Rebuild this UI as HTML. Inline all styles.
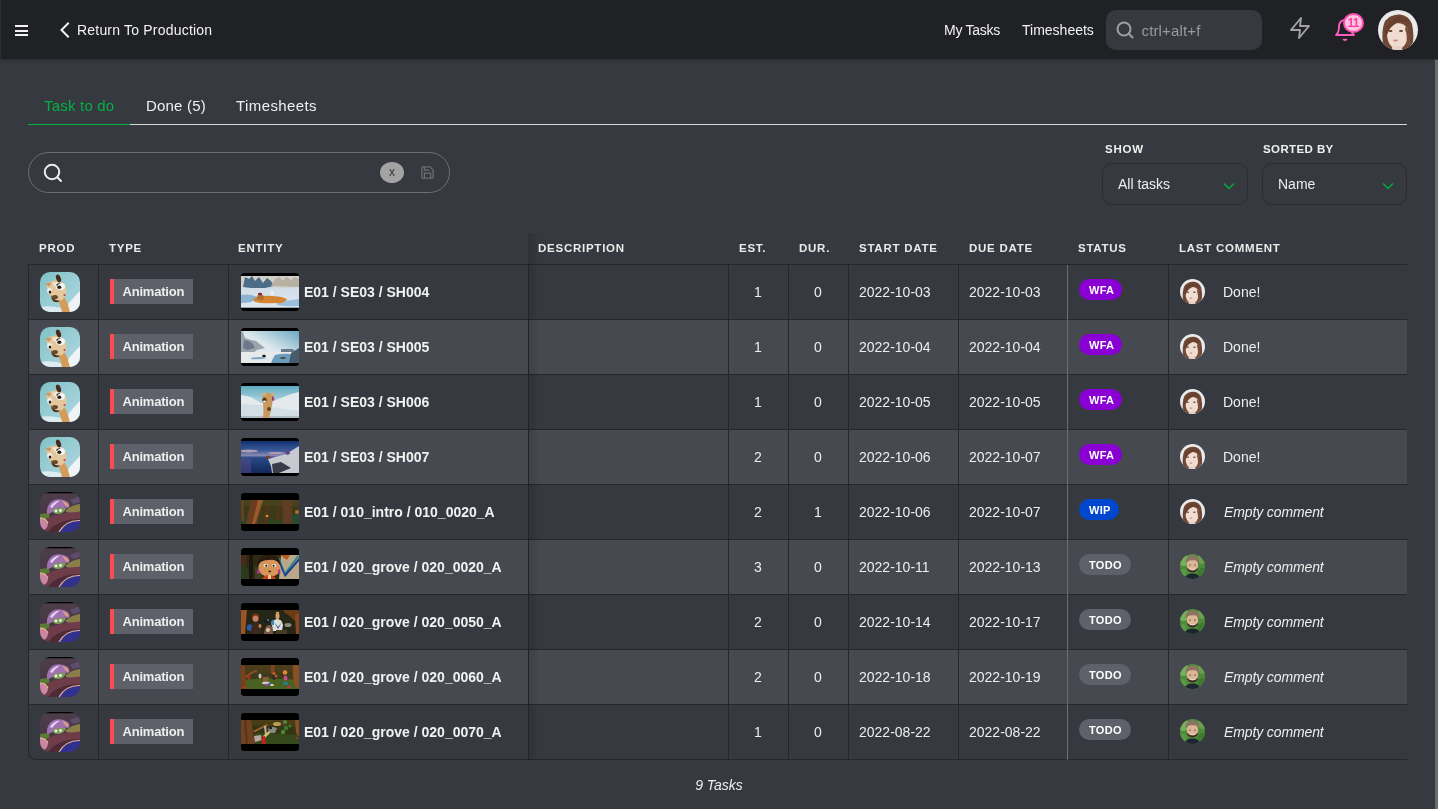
<!DOCTYPE html><html><head><meta charset="utf-8"><title>My Tasks</title><style>
*{margin:0;padding:0;box-sizing:border-box}
html,body{width:1438px;height:809px;overflow:hidden}
body{will-change:transform;background:#36393f;font-family:"Liberation Sans",sans-serif;color:#eeeeee;position:relative}
.abs{position:absolute}
.header{position:absolute;left:0;top:0;width:1438px;height:59px;background:#202125}
.lstrip{position:absolute;left:0;top:0;width:1px;height:59px;background:#2b2c30}
.burger{position:absolute;left:15px;width:13px;height:2px;background:#f2f2f2}
.htext{position:absolute;font-size:14px;color:#f2f2f2;top:22px;line-height:17px;white-space:nowrap}
.hsearch{position:absolute;left:1106px;top:10px;width:156px;height:40px;border-radius:10px;background:#36393f}
.ph{position:absolute;left:35.5px;top:11.5px;letter-spacing:0.15px;font-size:15px;color:#9a9a9a;line-height:17px}
.tabs{position:absolute;left:28px;top:124px;width:1379px;height:1px;background:#d6d6d6}
.tabact{position:absolute;left:28px;top:124px;width:102px;height:1px;background:#00b242}
.tab{position:absolute;top:97px;letter-spacing:0.2px;font-size:15px;line-height:18px;color:#f0f0f0;white-space:nowrap}
.sbar{position:absolute;left:28px;top:152px;width:422px;height:41px;border:1px solid #6f6f6f;border-radius:21px}
.xbtn{position:absolute;left:380px;top:162px;width:24px;height:21px;border-radius:50%;background:#a3a3a3;color:#333;font-size:12px;text-align:center;line-height:20px}
.flabel{position:absolute;top:143px;font-size:11.5px;font-weight:bold;letter-spacing:0.4px;color:#f0f0f0;line-height:13px}
.dd{position:absolute;top:163px;height:42px;border:1px solid #2a2c31;border-radius:10px}
.dd span{position:absolute;left:15px;top:12px;font-size:14px;line-height:17px;color:#eee}
.dd svg{position:absolute;left:120px;top:18px}
.th{position:absolute;top:242px;font-size:11.5px;font-weight:bold;letter-spacing:0.75px;color:#eaeaea;line-height:13px;white-space:nowrap}
.hline{position:absolute;left:28px;top:264px;width:1379px;height:1px;background:#25272b}
.row{position:absolute;left:28px;width:1379px;height:55px;border-bottom:1px solid #25272b;background:#36393f}
.row.alt{background:#46494f}
.row.last{border-left:1px solid #25272b;border-bottom-left-radius:8px;left:28px}
.row.last>div{margin-left:-1px}
.row>div{position:absolute;top:-1px;height:55px}
.c-prod{left:12px;width:40px}
.c-prod svg{position:absolute;top:8px;left:0;border-radius:10px}
.c-type{left:82px}
.tag{position:absolute;top:15px;left:0;height:25px;width:83px;background:#5e6169;border-left:4px solid #fa4b4f;font-size:13px;font-weight:bold;line-height:25px;padding-left:8.5px;letter-spacing:-0.2px;color:#eee;white-space:nowrap}
.c-ent{left:212px;width:290px}
.thumb{position:absolute;left:1px;top:9px;width:58px;height:38px;background:#000;border-radius:4px;overflow:hidden}
.thumb svg{display:block}
.ename{position:absolute;left:64px;top:20px;font-size:14px;font-weight:bold;line-height:17px;color:#f2f2f2;white-space:nowrap}
.c-est,.c-dur{width:60px;text-align:center;font-size:14px;line-height:17px;padding-top:20px;color:#eee}
.c-est{left:700px}.c-dur{left:760px}
.c-sd,.c-dd{font-size:14px;line-height:17px;padding-top:20px;color:#eee}
.c-sd{left:831px}.c-dd{left:941px}
.c-st{left:1051px}
.pill{position:absolute;top:15px;height:21px;border-radius:11px;font-size:11px;font-weight:bold;letter-spacing:0.3px;line-height:23px;padding:0 10px;color:#fff;white-space:nowrap}
.pill.wfa{background:#8a00d4;width:43px}
.pill.wip{background:#0047d0;width:40px}
.pill.todo{background:#5e6169;width:52px}
.c-com{left:1152px}
.cav{position:absolute;left:0;top:15px;width:25px;height:25px;border-radius:50%;overflow:hidden}
.cav svg{display:block}
.com{position:absolute;left:43px;top:20px;font-size:14px;line-height:17px;color:#eee;white-space:nowrap}
.com.it{font-style:italic;left:44px;letter-spacing:-0.12px}
.vl{position:absolute;top:265px;width:1px;height:495px;background:#25272b}
.vl.st{background:#6d6d6d}
.shadow{position:absolute;left:528px;top:233px;width:10px;height:527px;background:linear-gradient(to right,rgba(0,0,0,.10),rgba(0,0,0,.09) 40%,rgba(0,0,0,.04) 80%,rgba(0,0,0,0))}
.footer{position:absolute;left:0;width:1438px;top:777px;text-align:center;font-size:14px;font-style:italic;line-height:17px;color:#eee}
.scrollbar{position:absolute;left:1435px;top:60px;width:3px;height:749px;background:#6b6b6b}

</style></head><body>
<svg width="0" height="0" style="position:absolute">
<defs>
<linearGradient id="g-sky" x1="0" y1="0" x2="1" y2="1"><stop offset="0" stop-color="#7ec2c6"/><stop offset="1" stop-color="#b4d8e2"/></linearGradient>
<filter id="bl1" x="-10%" y="-10%" width="120%" height="120%"><feGaussianBlur stdDeviation="0.6"/></filter>
<filter id="bl2" x="-10%" y="-10%" width="120%" height="120%"><feGaussianBlur stdDeviation="0.45"/></filter>
<g id="p-scrat"><rect width="40" height="40" fill="url(#g-sky)"/>
 <g filter="url(#bl1)">
 <path d="M26 40 L29 31 Q34 25 40 19 L40 40Z" fill="#eef4f6"/>
 <path d="M0 35 Q12 33 24 37 L24 40 L0 40Z" fill="#dcecf0"/>
 <path d="M19 23 Q25 24 27 30 L30 40 L22 40 Q20 31 17 27Z" fill="#d49c58"/>
 <path d="M6 12 Q12 7 19 9 Q26 12 26.5 18 Q26 25 22 28 Q16 31 12 27 Q8 22 6 12Z" fill="#e2c89c"/>
 <path d="M12 11 Q20 8 25 13 Q20 12 15 15Z" fill="#f2e8d4"/>
 <path d="M11 23 Q14 29 20 28.5 Q18 31.5 13.5 29.5 Q11 27 11 23Z" fill="#4a3020"/>
 <ellipse cx="15" cy="25" rx="3" ry="2" fill="#6a4a30"/>
 <ellipse cx="18.5" cy="6.5" rx="2.3" ry="4" fill="#4a2a1a" transform="rotate(-20 18.5 6.5)"/>
 <path d="M5.5 12.5 Q8 9.5 11.5 11 L9.5 14.5Z" fill="#c89868"/>
 <ellipse cx="20.5" cy="14.5" rx="4.5" ry="3.4" fill="#f4f4f2"/>
 <path d="M16 13 Q18 10.5 21 11 Q18 12 17 14Z" fill="#3a2414"/>
 <ellipse cx="19.3" cy="15.3" rx="2" ry="1.8" fill="#2a1a14"/>
 <ellipse cx="9.5" cy="18.8" rx="2.4" ry="2.8" fill="#f2f2ee"/>
 <ellipse cx="10" cy="20" rx="1.3" ry="1.5" fill="#2a1a14"/>
 <circle cx="24.5" cy="23" r="1" fill="#d83030"/>
 </g></g>
<linearGradient id="g-mush" x1="0" y1="0" x2="0" y2="1"><stop offset="0" stop-color="#4e3e4c"/><stop offset="1" stop-color="#44303e"/></linearGradient>
<g id="p-mush"><rect width="40" height="40" fill="url(#g-mush)"/>
 <g filter="url(#bl1)">
 <rect width="40" height="1.3" fill="#000"/>
 <path d="M30 8 L40 4 L40 10 L33 12Z" fill="#5e4e6e"/>
 <path d="M26 18 Q32 13 40 12 L40 20 Q32 22 26 20Z" fill="#8a7e4a"/>
 <path d="M0 22 L9 21 L10 28 L0 28Z" fill="#5a7a34"/>
 <path d="M0 30 Q14 22 26 21 Q34 20 40 19.5 L40 27 Q30 27 22 30 Q14 34 8 40 L0 40Z" fill="#6e3c4a"/>
 <path d="M8 40 Q14 32 22 30 Q30 27 40 27 L40 40Z" fill="#4e2c36"/>
 <path d="M19 40 Q26 28 40 28.5 L40 40Z" fill="#30308e"/>
 <path d="M19 40 Q26 28 40 28.5" fill="none" stroke="#e0b0a0" stroke-width="1.2"/>
 <path d="M0 26 Q6 26 8 31 Q8 36 4 38 L0 38Z" fill="#cc86a4"/>
 <path d="M0 26 Q6 26 8 31" fill="none" stroke="#e8d090" stroke-width="1"/>
 <path d="M7 22 Q6 13 13 8.5 Q21 5.5 28 10 Q31 14 28 16 Q21 15 15 18 Q10 22 7 22Z" fill="#a070b0"/>
 <path d="M10 15 Q13 9 20 8.5 Q16 11 12 16Z" fill="#dcd4f4"/>
 <path d="M22 9 Q28 10 29 15 L26 14Z" fill="#e0a080"/>
 <path d="M12 18 Q18 15 26 16 Q25 21 19 22 Q13 22.5 12 18Z" fill="#7a9a54"/>
 <circle cx="16" cy="19" r="1.4" fill="#f2f2f2"/><circle cx="20.5" cy="18.5" r="1.4" fill="#f2f2f2"/>
 </g></g>
<g id="av-f"><rect width="40" height="40" fill="#eaeaea"/>
 <g filter="url(#bl2)">
 <path d="M5 36 Q3 20 7 11 Q13 4 22 4.5 Q31 5.5 34 14 Q36 24 35 32 Q33 37 28 39 L12 39 Q7 38 5 36Z" fill="#6e4634"/>
 <path d="M9 24 Q9 15 17 13 Q27 12 30 20 Q31 32 24 38 Q19 40 15 38 Q9 33 9 24Z" fill="#f0dcd0"/>
 <rect x="14" y="36" width="10" height="4" fill="#e8d0c4"/>
 <path d="M7 22 Q10 9 21 7 Q29 7 32 14 Q26 10 19 13 Q12 16 9 25Z" fill="#68402e"/>
 <path d="M28 16 Q33 24 32 34 L28 37 Q30 26 27 19Z" fill="#7a4e3a"/>
 <ellipse cx="12.5" cy="21" rx="2" ry="0.9" fill="#5a3a30"/><ellipse cx="23" cy="21" rx="2" ry="0.9" fill="#5a3a30"/>
 <ellipse cx="17.5" cy="30.5" rx="2.6" ry="1" fill="#c48c84"/>
 </g></g>
<g id="av-m"><rect width="40" height="40" fill="#4e8a3c"/>
 <g filter="url(#bl2)">
 <circle cx="6" cy="10" r="9" fill="#78b05a"/><circle cx="36" cy="8" r="8" fill="#6aa04c"/><circle cx="36" cy="30" r="8" fill="#3e7a30"/><circle cx="4" cy="30" r="6" fill="#5a9a44"/>
 <path d="M7 40 Q9 31 20 31 Q31 31 33 40Z" fill="#1e2630"/>
 <ellipse cx="20" cy="18" rx="9" ry="11" fill="#dcb696"/>
 <path d="M9 16 Q7 3 20 2 Q33 3 31 16 Q29 9 20 10 Q12 9 9 16Z" fill="#8c7460"/>
 <path d="M11 22 Q20 31 29 22 Q28 29 20 29.5 Q12 29 11 22Z" fill="#3a2a20"/>
 <ellipse cx="16" cy="17.5" rx="1.3" ry="0.8" fill="#3a2a20"/><ellipse cx="24" cy="17.5" rx="1.3" ry="0.8" fill="#3a2a20"/>
 <path d="M16 24 Q20 26 24 24" fill="none" stroke="#f0f0f0" stroke-width="1"/>
 </g></g>
<linearGradient id="g-snow" x1="0" y1="0" x2="0" y2="1"><stop offset="0" stop-color="#c8d8e4"/><stop offset="1" stop-color="#dfe8ee"/></linearGradient>
<g id="t1"><rect width="58" height="38" fill="#000"/><g filter="url(#bl2)"><rect y="3" width="58" height="32" fill="url(#g-snow)"/>
 <path d="M0 3 L58 3 L58 14 Q40 16 30 13 Q15 15 0 14Z" fill="#d0d0c8"/>
 <path d="M2 14 L4 4 L8 6 L11 3 L14 8 L18 4 L22 10 L26 5 L30 8 L33 13 L24 15 L10 15Z" fill="#4e6c88"/>
 <path d="M30 13 L34 6 L38 4 L42 8 L45 4 L50 7 L54 4 L58 6 L58 14Z" fill="#b8b0a0"/>
 <path d="M0 22 Q10 20 18 25 Q12 30 0 30Z" fill="#8ab2d2"/>
 <path d="M36 30 Q46 27 58 26 L58 33 Q46 34 36 32Z" fill="#9ac0dc"/>
 <path d="M12 26 Q20 22 30 23 Q40 23 46 26 Q44 31 34 30 Q22 31 14 29Z" fill="#d48432"/>
 <ellipse cx="19.5" cy="24.5" rx="3.5" ry="3" fill="#b07030"/>
 <ellipse cx="19" cy="21" rx="2.2" ry="1.2" fill="#8a2030"/>
 <ellipse cx="31" cy="20" rx="1.6" ry="2.2" fill="#f0f0f0"/>
 <rect y="34" width="58" height="1" fill="#9aa8b0"/>
</g></g>
<linearGradient id="g-ice" x1="0" y1="1" x2="1" y2="0"><stop offset="0" stop-color="#e8ecec"/><stop offset=".5" stop-color="#dde8ec"/><stop offset="1" stop-color="#6aa8c4"/></linearGradient>
<g id="t2"><rect width="58" height="38" fill="#000"/><g filter="url(#bl2)"><rect y="3" width="58" height="32" fill="url(#g-ice)"/>
 <path d="M0 3 L2 4 L4 10 L10 12 L15 13 L20 17 L24 20 L16 22 L12 25 L0 27Z" fill="#9aa4ac"/>
 <path d="M3 12 L8 13 L12 16 L14 20 L6 22 L2 20Z" fill="#6a7a88"/>
 <rect y="24" width="58" height="11" fill="#e6eaea"/>
 <path d="M34 27 Q42 25 50 26 L58 27 L58 35 L30 35 Q32 30 34 27Z" fill="#6a9cbc"/>
 <path d="M10 30 Q18 28 26 30 Q18 32 10 31Z" fill="#7aa6c4"/>
 <path d="M40 21 L52 21 L54 24 L40 24Z" fill="#6a7a88"/>
 <path d="M48 35 L50 25 L58 20 L58 35Z" fill="#4a5a6a"/>
 <ellipse cx="23" cy="28" rx="1.8" ry="1.3" fill="#181818"/>
 <ellipse cx="42" cy="30" rx="3" ry="1" fill="#4a4a40"/>
</g></g>
<linearGradient id="g-t3" x1="0" y1="0" x2="0" y2="1"><stop offset="0" stop-color="#5eaac0"/><stop offset=".45" stop-color="#aad0dc"/><stop offset="1" stop-color="#d4e2e8"/></linearGradient>
<g id="t3"><rect width="58" height="38" fill="#000"/><g filter="url(#bl2)"><rect y="3" width="58" height="32" fill="url(#g-t3)"/>
 <path d="M0 12 L10 14 L20 20 L30 19 L40 15 L50 11 L58 9 L58 28 L0 27Z" fill="#e4eaec"/>
 <path d="M0 21 L20 22 L30 24 L44 26 L58 28 L58 33 L0 33Z" fill="#d2dee4"/>
 <rect y="33" width="58" height="2" fill="#b0bec4"/>
 <path d="M22 20 Q20 14 23 11 Q28 9 32 11 Q33 16 31 22 Q30 28 28 35 L22 35 Q23 28 22 20Z" fill="#c89a60"/>
 <path d="M20 11 Q23 9 26 11 L24 13Z" fill="#d8b070"/>
 <path d="M29 11 Q32 9 34 11 L32 13Z" fill="#d8b070"/>
 <ellipse cx="23.5" cy="17" rx="2.2" ry="2.6" fill="#5a3010"/>
 <ellipse cx="23.5" cy="18.5" rx="1.5" ry="1" fill="#f4f4f0"/>
 <path d="M31 13 Q34 14 33 18 L31 17Z" fill="#a04060"/>
 <ellipse cx="28" cy="26" rx="2" ry="2" fill="#6a4020"/>
</g></g>
<linearGradient id="g-t4" x1="0" y1="0" x2="0" y2="1"><stop offset="0" stop-color="#123070"/><stop offset=".3" stop-color="#3a5a9a"/><stop offset=".45" stop-color="#8a88b0"/><stop offset=".52" stop-color="#2a4a88"/><stop offset="1" stop-color="#10285a"/></linearGradient>
<g id="t4"><rect width="58" height="38" fill="#000"/><g filter="url(#bl2)"><rect y="3" width="58" height="32" fill="url(#g-t4)"/>
 <ellipse cx="8" cy="13" rx="9" ry="1.5" fill="#c8b0b8" opacity=".8"/>
 <ellipse cx="35" cy="15" rx="8" ry="1" fill="#c8a8b8" opacity=".8"/>
 <rect x="0" y="20" width="10" height="15" fill="#5a4a8a" opacity=".5"/>
 <path d="M27 21 L34 19 L42 17 L50 13 L58 8 L58 35 L31 35 L30 28Z" fill="#c8c8d0"/>
 <path d="M31 26 L40 24 L50 30 L38 35 L32 35Z" fill="#3a3a48"/>
 <path d="M44 12 L48 11 L49 16 L45 17Z" fill="#5a4a8a"/>
 <ellipse cx="27" cy="19" rx="2.2" ry="1.2" fill="#8a4020"/>
</g></g>
<g id="t5"><rect width="58" height="38" fill="#000"/><g filter="url(#bl2)"><rect y="7" width="58" height="24" fill="#3a3a1a"/>
 <rect y="7" width="58" height="6" fill="#44421e"/>
 <path d="M0 25 L10 24 L10 31 L0 31Z" fill="#2e4422"/>
 <path d="M22 28 Q36 24 44 28 L44 31 L20 31Z" fill="#2e4420"/>
 <path d="M50 22 Q56 20 58 22 L58 31 L50 31Z" fill="#2a4a30"/>
 <path d="M10 7 L22 7 L16 31 L5 31Z" fill="#6a3e20"/>
 <path d="M17 7 L22 7 L14 31 L11 31Z" fill="#9a5a2a"/>
 <path d="M25 12 L29 12 L26 31 L22 31Z" fill="#543418"/>
 <path d="M36 14 L39 14 L38 28 L35 28Z" fill="#543418"/>
 <path d="M41 7 L51 7 L51 31 L42 31Z" fill="#5e3c20"/>
 <ellipse cx="26" cy="23" rx="1.5" ry="1.2" fill="#d88a30"/>
 <ellipse cx="56" cy="19" rx="2" ry="2" fill="#b07030"/>
 <rect x="0" y="8" width="3" height="20" fill="#7a4a20" opacity=".6"/>
</g></g>
<g id="t6"><rect width="58" height="38" fill="#000"/><g filter="url(#bl2)"><rect y="7" width="58" height="24" fill="#2e2a14"/>
 <rect x="0" y="7" width="5" height="24" fill="#4a2a14"/>
 <path d="M4 16 Q8 20 10 31 L0 31 L0 18Z" fill="#2a3a1a"/>
 <path d="M8 7 L12 7 L12 31 L8 31Z" fill="#1a140c"/>
 <path d="M14 18 L20 22 L22 31 L14 31Z" fill="#3a4020"/>
 <path d="M40 7 L58 7 L58 31 L38 31Z" fill="#b8a888"/>
 <path d="M39 7 L49 7 L46 12Z" fill="#b85a20"/>
 <path d="M38 9 L44 24 L57 7 L58 9 L44 27 L37 11Z" fill="#2a8a90"/>
 <path d="M39 13 L44 26 L58 10 L58 13 L44 29 L38 16Z" fill="#1a3a8a"/>
 <ellipse cx="28.5" cy="19.5" rx="11" ry="9.5" fill="#d8955a"/>
 <path d="M17 17 Q16 7 28 7 Q40 7 39 17 Q36 11 28 12 Q20 12 17 17Z" fill="#2a1a10"/>
 <ellipse cx="24.8" cy="17.5" rx="2.3" ry="1.6" fill="#f0f0f0"/><ellipse cx="33" cy="17.5" rx="2.3" ry="1.6" fill="#f0f0f0"/>
 <circle cx="25.2" cy="17.8" r="1" fill="#111"/><circle cx="32.6" cy="17.8" r="1" fill="#111"/>
 <ellipse cx="28.7" cy="23.3" rx="1.4" ry="0.9" fill="#3a1a10"/>
 <ellipse cx="17.4" cy="23.5" rx="1.2" ry="2.5" fill="#c02ca0"/><ellipse cx="38.2" cy="23.5" rx="1.2" ry="2.5" fill="#c02ca0"/>
 <path d="M21 31 Q23 27 28 27 Q33 27 35 31Z" fill="#c84418"/>
 <rect x="27" y="27" width="3" height="4" fill="#e8c8a0"/>
</g></g>
<g id="t7"><rect width="58" height="38" fill="#000"/><g filter="url(#bl2)"><rect y="7" width="58" height="24" fill="#262612"/>
 <path d="M0 7 L6 7 L4 31 L0 31Z" fill="#9a5420"/>
 <path d="M42 7 L58 7 L58 24 Q52 14 44 10Z" fill="#6a3a16"/>
 <path d="M54 12 L58 10 L58 31 L55 31Z" fill="#8a4a1a"/>
 <path d="M9 31 Q10 20 14 19 Q20 19 21 31Z" fill="#3a2a1a"/>
 <ellipse cx="14.5" cy="15.5" rx="3" ry="3.3" fill="#c88060"/>
 <path d="M11 14 Q12 10 15 11 Q18 11 18 14 Q15 12 11 14Z" fill="#8a3a18"/>
 <path d="M6 23 Q8 20 11 22 L10 28 L6 27Z" fill="#2a5aa8"/>
 <ellipse cx="19" cy="23" rx="1.5" ry="2" fill="#c88060"/>
 <path d="M23 31 Q24 22 28 22 Q32 22 32 31Z" fill="#7a5a4a"/>
 <ellipse cx="25" cy="18.5" rx="2" ry="2" fill="#1a1a2a"/>
 <ellipse cx="27" cy="17" rx="1" ry="1" fill="#3a8ab0"/>
 <ellipse cx="27" cy="27" rx="2" ry="2" fill="#d8c8a0"/>
 <path d="M31 22 Q32 16 36 16 Q41 16 42 22 L41 28 L32 28Z" fill="#e0e0d8"/>
 <path d="M32 17 L37 26 L42 17 L41 19 L37 24 L33 19Z" fill="#2a4aa0"/>
 <path d="M30 19 Q31 16 33 17 L33 22 L30 22Z" fill="#3a8ab0"/>
 <ellipse cx="36.5" cy="13" rx="2" ry="3.3" fill="#d8a070"/>
 <path d="M34.5 10 Q36.5 7.5 38.5 10Z" fill="#e0b040"/>
 <ellipse cx="47" cy="22" rx="3.5" ry="2" fill="#8a8a80"/>
 <rect x="35" y="27" width="11" height="4" fill="#4a3a20"/>
</g></g>
<g id="t8"><rect width="58" height="38" fill="#000"/><g filter="url(#bl2)"><rect y="7" width="58" height="24" fill="#3c3a1a"/>
 <path d="M0 7 L58 7 L58 14 Q30 16 0 14Z" fill="#4a3e1c"/>
 <path d="M30 7 L34 7 L33 16 L30 16Z" fill="#7a4a20"/>
 <path d="M0 22 Q30 19 58 22 L58 31 L0 31Z" fill="#4a6220"/>
 <path d="M0 7 L4 8 L5 31 L0 31Z" fill="#7a4018"/>
 <path d="M4 18 Q10 13 16 12 L16 14 Q10 15 6 20Z" fill="#8a5020"/>
 <path d="M52 7 L58 7 L58 31 L54 28 Q51 18 52 7Z" fill="#8a5020"/>
 <path d="M22 19 L28 19 L27 24 L22 24Z" fill="#8a6030"/>
 <ellipse cx="8" cy="19" rx="1.5" ry="2.5" fill="#a03020"/>
 <ellipse cx="19" cy="18" rx="1.5" ry="2.5" fill="#c8c8c0"/>
 <ellipse cx="33" cy="19" rx="1.8" ry="3" fill="#2a2a2a"/><circle cx="33" cy="15.5" r="1.5" fill="#c06030"/>
 <ellipse cx="35" cy="18" rx="1.5" ry="1.5" fill="#b05a28"/>
 <ellipse cx="44.5" cy="20" rx="2" ry="2.5" fill="#c8508a"/><circle cx="44" cy="14.5" r="2.3" fill="#e08830"/>
 <rect x="42" y="24" width="5" height="3" fill="#2a7a80"/>
 <ellipse cx="25" cy="25" rx="4" ry="1.3" fill="#d0d0c0"/>
 <ellipse cx="29" cy="26" rx="2" ry="1.3" fill="#3a5ab0"/>
 <ellipse cx="25" cy="27" rx="1.5" ry="1.2" fill="#9a3ab0"/>
 <ellipse cx="31" cy="27" rx="2" ry="1" fill="#e8e0a0"/>
 <ellipse cx="4" cy="29.5" rx="1.5" ry="1" fill="#c03030"/><ellipse cx="48" cy="29" rx="2" ry="1" fill="#c03050"/>
</g></g>
<g id="t9"><rect width="58" height="38" fill="#000"/><g filter="url(#bl2)"><rect y="7" width="58" height="24" fill="#343616"/>
 <path d="M10 7 L58 7 L58 14 L10 12Z" fill="#4a3c18"/>
 <path d="M14 20 L58 22 L58 31 L14 31Z" fill="#364a1c"/>
 <path d="M0 7 L10 7 L14 31 L0 31Z" fill="#6e4220"/>
 <path d="M3 7 L5 7 L7 31 L5 31Z" fill="#5a3416"/>
 <path d="M54 7 L58 7 L58 24 L55 20Z" fill="#8a5020"/>
 <path d="M12 18 L26 11 L27 12.5 L13 19.5Z" fill="#a06030"/>
 <ellipse cx="36" cy="11" rx="4" ry="2" fill="#b8a058"/>
 <circle cx="44" cy="9" r="2" fill="#4a8a40"/><circle cx="45" cy="15" r="2.2" fill="#3a7a30"/><circle cx="42" cy="19" r="2.2" fill="#4a8a30"/><circle cx="49" cy="13" r="1.6" fill="#3a7a30"/>
 <path d="M23 13 L25 13 L26 22 L24 22Z" fill="#b8b4a8"/>
 <path d="M27 15 Q31 13 36 15 L34 20 L28 20Z" fill="#8a8a80"/>
 <ellipse cx="29.5" cy="15" rx="1.5" ry="1.3" fill="#1a1a1a"/>
 <path d="M22 23 L28 18 L29 20 L23 26Z" fill="#d8c070"/>
 <path d="M13 23 L20 22 L21 27 L14 29Z" fill="#b0aca0"/>
 <path d="M20 24 L24 23 L25 31 L21 31Z" fill="#c02020"/>
 <ellipse cx="56" cy="25" rx="1.2" ry="0.8" fill="#c03050"/>
</g></g>
</defs></svg>

<div class="header">
 <div class="lstrip"></div>
 <div class="burger" style="top:25px"></div><div class="burger" style="top:30px"></div><div class="burger" style="top:34px"></div>
 <svg class="abs" style="left:59px;top:22px" width="12" height="16" viewBox="0 0 12 16"><polyline points="9,1.5 2.5,8 9,14.5" fill="none" stroke="#f2f2f2" stroke-width="2" stroke-linecap="square"/></svg>
 <div class="htext" style="left:77px;letter-spacing:0.2px">Return To Production</div>
 <div class="htext" style="left:944px;letter-spacing:-0.25px">My Tasks</div>
 <div class="htext" style="left:1022px">Timesheets</div>
 <div class="hsearch">
  <svg class="abs" style="left:10px;top:11px" width="18" height="18" viewBox="0 0 18 18"><circle cx="8" cy="8" r="6.5" fill="none" stroke="#a0a0a0" stroke-width="2"/><line x1="12.8" y1="12.8" x2="16.5" y2="16.5" stroke="#a0a0a0" stroke-width="2" stroke-linecap="round"/></svg>
  <div class="ph">ctrl+alt+f</div>
 </div>
 <svg class="abs" style="left:1288px;top:16px" width="24" height="24" viewBox="0 0 24 24"><polygon points="13 2 3 14 12 14 11 22 21 10 12 10 13 2" fill="none" stroke="#a3a3a3" stroke-width="1.9" stroke-linejoin="round"/></svg>
 <svg class="abs" style="left:1333px;top:18px" width="24" height="24" viewBox="0 0 24 24"><path d="M18 8A6 6 0 0 0 6 8c0 7-3 9-3 9h18s-3-2-3-9" fill="none" stroke="#ff5cc0" stroke-width="1.9" stroke-linejoin="round"/><path d="M13.73 21a2 2 0 0 1-3.46 0" fill="none" stroke="#ff5cc0" stroke-width="1.9"/></svg>
 <div class="abs" style="left:1343px;top:13px;width:21px;height:20px;border-radius:50%;background:#ffc6dc;border:2px solid #ff4fb5;color:#ff3aa8;font-size:12px;font-weight:bold;text-align:center;line-height:17px;letter-spacing:-0.8px;text-indent:-0.8px">11</div>
 <div class="abs" style="left:1378px;top:10px;width:40px;height:40px;border-radius:50%;overflow:hidden"><svg width="40" height="40" viewBox="0 0 40 40"><use href="#av-f"/></svg></div>
</div>
<div class="abs" style="left:0;top:59px;width:1435px;height:5px;background:linear-gradient(rgba(0,0,0,.14),rgba(0,0,0,.07) 50%,rgba(0,0,0,0))"></div>
<div class="tab" style="left:44px;color:#00b242">Task to do</div>
<div class="tab" style="left:146px">Done (5)</div>
<div class="tab" style="left:236px;letter-spacing:0.4px">Timesheets</div>
<div class="tabs"></div><div class="tabact"></div>
<div class="sbar"></div>
<svg class="abs" style="left:42px;top:162px" width="22" height="22" viewBox="0 0 22 22"><circle cx="10" cy="10" r="7.2" fill="none" stroke="#eeeeee" stroke-width="2"/><line x1="15.3" y1="15.3" x2="19" y2="19" stroke="#eeeeee" stroke-width="2" stroke-linecap="round"/></svg>
<div class="xbtn">x</div>
<svg class="abs" style="left:420px;top:165px" width="15" height="15" viewBox="0 0 24 24"><path d="M19 21H5a2 2 0 0 1-2-2V5a2 2 0 0 1 2-2h11l5 5v11a2 2 0 0 1-2 2z" fill="none" stroke="#6e6e6e" stroke-width="2"/><polyline points="17 21 17 13 7 13 7 21" fill="none" stroke="#6e6e6e" stroke-width="2"/><polyline points="7 3 7 8 15 8" fill="none" stroke="#6e6e6e" stroke-width="2"/></svg>
<div class="flabel" style="left:1105px;letter-spacing:0.8px">SHOW</div>
<div class="flabel" style="left:1263px">SORTED BY</div>
<div class="dd" style="left:1102px;width:146px"><span>All tasks</span><svg width="12" height="8" viewBox="0 0 12 8"><polyline points="1,1.5 6,6.5 11,1.5" fill="none" stroke="#00b242" stroke-width="1.25"/></svg></div>
<div class="dd" style="left:1262px;width:145px"><span>Name</span><svg style="left:119px" width="12" height="8" viewBox="0 0 12 8"><polyline points="1,1.5 6,6.5 11,1.5" fill="none" stroke="#00b242" stroke-width="1.25"/></svg></div>
<div class="th" style="left:39px">PROD</div>
<div class="th" style="left:109px">TYPE</div>
<div class="th" style="left:238px">ENTITY</div>
<div class="th" style="left:538px">DESCRIPTION</div>
<div class="th" style="left:739px">EST.</div>
<div class="th" style="left:799px">DUR.</div>
<div class="th" style="left:859px">START DATE</div>
<div class="th" style="left:969px">DUE DATE</div>
<div class="th" style="left:1078px">STATUS</div>
<div class="th" style="left:1179px">LAST COMMENT</div>
<div class="hline"></div>

<div class="rows">
<div class="row" style="top:265px"><div class="c-prod"><svg width="40" height="40"><use href="#p-scrat"/></svg></div><div class="c-type"><span class="tag">Animation</span></div><div class="c-ent"><span class="thumb"><svg width="58" height="38"><use href="#t1"/></svg></span><span class="ename">E01 / SE03 / SH004</span></div><div class="c-est">1</div><div class="c-dur">0</div><div class="c-sd">2022-10-03</div><div class="c-dd">2022-10-03</div><div class="c-st"><span class="pill wfa">WFA</span></div><div class="c-com"><span class="cav"><svg width="25" height="25" viewBox="0 0 40 40"><use href="#av-f"/></svg></span><span class="com">Done!</span></div></div>
<div class="row alt" style="top:320px"><div class="c-prod"><svg width="40" height="40"><use href="#p-scrat"/></svg></div><div class="c-type"><span class="tag">Animation</span></div><div class="c-ent"><span class="thumb"><svg width="58" height="38"><use href="#t2"/></svg></span><span class="ename">E01 / SE03 / SH005</span></div><div class="c-est">1</div><div class="c-dur">0</div><div class="c-sd">2022-10-04</div><div class="c-dd">2022-10-04</div><div class="c-st"><span class="pill wfa">WFA</span></div><div class="c-com"><span class="cav"><svg width="25" height="25" viewBox="0 0 40 40"><use href="#av-f"/></svg></span><span class="com">Done!</span></div></div>
<div class="row" style="top:375px"><div class="c-prod"><svg width="40" height="40"><use href="#p-scrat"/></svg></div><div class="c-type"><span class="tag">Animation</span></div><div class="c-ent"><span class="thumb"><svg width="58" height="38"><use href="#t3"/></svg></span><span class="ename">E01 / SE03 / SH006</span></div><div class="c-est">1</div><div class="c-dur">0</div><div class="c-sd">2022-10-05</div><div class="c-dd">2022-10-05</div><div class="c-st"><span class="pill wfa">WFA</span></div><div class="c-com"><span class="cav"><svg width="25" height="25" viewBox="0 0 40 40"><use href="#av-f"/></svg></span><span class="com">Done!</span></div></div>
<div class="row alt" style="top:430px"><div class="c-prod"><svg width="40" height="40"><use href="#p-scrat"/></svg></div><div class="c-type"><span class="tag">Animation</span></div><div class="c-ent"><span class="thumb"><svg width="58" height="38"><use href="#t4"/></svg></span><span class="ename">E01 / SE03 / SH007</span></div><div class="c-est">2</div><div class="c-dur">0</div><div class="c-sd">2022-10-06</div><div class="c-dd">2022-10-07</div><div class="c-st"><span class="pill wfa">WFA</span></div><div class="c-com"><span class="cav"><svg width="25" height="25" viewBox="0 0 40 40"><use href="#av-f"/></svg></span><span class="com">Done!</span></div></div>
<div class="row" style="top:485px"><div class="c-prod"><svg width="40" height="40"><use href="#p-mush"/></svg></div><div class="c-type"><span class="tag">Animation</span></div><div class="c-ent"><span class="thumb"><svg width="58" height="38"><use href="#t5"/></svg></span><span class="ename">E01 / 010_intro / 010_0020_A</span></div><div class="c-est">2</div><div class="c-dur">1</div><div class="c-sd">2022-10-06</div><div class="c-dd">2022-10-07</div><div class="c-st"><span class="pill wip">WIP</span></div><div class="c-com"><span class="cav"><svg width="25" height="25" viewBox="0 0 40 40"><use href="#av-f"/></svg></span><span class="com it">Empty comment</span></div></div>
<div class="row alt" style="top:540px"><div class="c-prod"><svg width="40" height="40"><use href="#p-mush"/></svg></div><div class="c-type"><span class="tag">Animation</span></div><div class="c-ent"><span class="thumb"><svg width="58" height="38"><use href="#t6"/></svg></span><span class="ename">E01 / 020_grove / 020_0020_A</span></div><div class="c-est">3</div><div class="c-dur">0</div><div class="c-sd">2022-10-11</div><div class="c-dd">2022-10-13</div><div class="c-st"><span class="pill todo">TODO</span></div><div class="c-com"><span class="cav"><svg width="25" height="25" viewBox="0 0 40 40"><use href="#av-m"/></svg></span><span class="com it">Empty comment</span></div></div>
<div class="row" style="top:595px"><div class="c-prod"><svg width="40" height="40"><use href="#p-mush"/></svg></div><div class="c-type"><span class="tag">Animation</span></div><div class="c-ent"><span class="thumb"><svg width="58" height="38"><use href="#t7"/></svg></span><span class="ename">E01 / 020_grove / 020_0050_A</span></div><div class="c-est">2</div><div class="c-dur">0</div><div class="c-sd">2022-10-14</div><div class="c-dd">2022-10-17</div><div class="c-st"><span class="pill todo">TODO</span></div><div class="c-com"><span class="cav"><svg width="25" height="25" viewBox="0 0 40 40"><use href="#av-m"/></svg></span><span class="com it">Empty comment</span></div></div>
<div class="row alt" style="top:650px"><div class="c-prod"><svg width="40" height="40"><use href="#p-mush"/></svg></div><div class="c-type"><span class="tag">Animation</span></div><div class="c-ent"><span class="thumb"><svg width="58" height="38"><use href="#t8"/></svg></span><span class="ename">E01 / 020_grove / 020_0060_A</span></div><div class="c-est">2</div><div class="c-dur">0</div><div class="c-sd">2022-10-18</div><div class="c-dd">2022-10-19</div><div class="c-st"><span class="pill todo">TODO</span></div><div class="c-com"><span class="cav"><svg width="25" height="25" viewBox="0 0 40 40"><use href="#av-m"/></svg></span><span class="com it">Empty comment</span></div></div>
<div class="row last" style="top:705px"><div class="c-prod"><svg width="40" height="40"><use href="#p-mush"/></svg></div><div class="c-type"><span class="tag">Animation</span></div><div class="c-ent"><span class="thumb"><svg width="58" height="38"><use href="#t9"/></svg></span><span class="ename">E01 / 020_grove / 020_0070_A</span></div><div class="c-est">1</div><div class="c-dur">0</div><div class="c-sd">2022-08-22</div><div class="c-dd">2022-08-22</div><div class="c-st"><span class="pill todo">TODO</span></div><div class="c-com"><span class="cav"><svg width="25" height="25" viewBox="0 0 40 40"><use href="#av-m"/></svg></span><span class="com it">Empty comment</span></div></div>
</div>
<div class="vl" style="left:98px"></div><div class="vl" style="left:228px"></div><div class="vl" style="left:528px"></div><div class="vl" style="left:728px"></div><div class="vl" style="left:788px"></div><div class="vl" style="left:848px"></div><div class="vl" style="left:958px"></div><div class="vl st" style="left:1067px"></div><div class="vl" style="left:1168px"></div><div class="vl" style="left:28px;height:440px"></div><div class="shadow"></div>
<div class="footer">9 Tasks</div>
<div class="scrollbar"></div>
</body></html>
